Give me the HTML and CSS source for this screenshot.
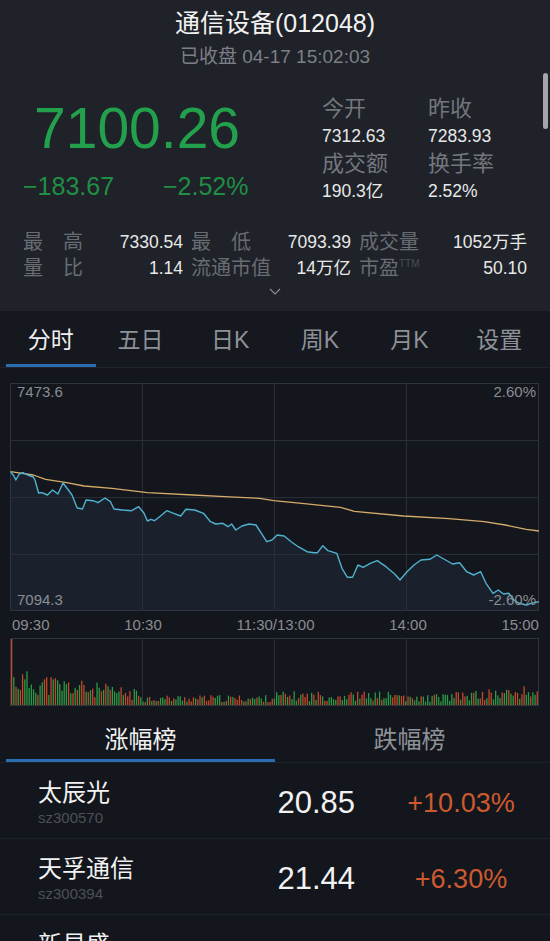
FILE: index.html
```html
<!DOCTYPE html>
<html lang="zh-CN">
<head>
    <meta charset="UTF-8">
    <meta name="viewport" content="width=device-width, initial-scale=1.0">
    <title>通信设备(012048)</title>
    <link rel="stylesheet" href="styles.css">
</head>
<body>
    <div class="quote">
        <div class="scroll-thumb"></div>
        <h1 class="title">通信设备(012048)</h1>
        <div class="status">已收盘 04-17 15:02:03</div>

        <div class="summary">
            <div class="price-block">
                <div class="price">7100.26</div>
                <div class="change"><span class="change-abs">−183.67</span><span>−2.52%</span></div>
            </div>
            <div class="stats">
                <div class="stat-label">今开</div>
                <div class="stat-label">昨收</div>
                <div class="stat-value">7312.63</div>
                <div class="stat-value">7283.93</div>
                <div class="stat-label">成交额</div>
                <div class="stat-label">换手率</div>
                <div class="stat-value">190.3亿</div>
                <div class="stat-value">2.52%</div>
            </div>
        </div>

        <div class="details">
            <div class="detail"><span class="detail-label">最&emsp;高</span><span class="detail-value">7330.54</span></div>
            <div class="detail"><span class="detail-label">最&emsp;低</span><span class="detail-value">7093.39</span></div>
            <div class="detail"><span class="detail-label">成交量</span><span class="detail-value">1052万手</span></div>
            <div class="detail"><span class="detail-label">量&emsp;比</span><span class="detail-value">1.14</span></div>
            <div class="detail"><span class="detail-label">流通市值</span><span class="detail-value">14万亿</span></div>
            <div class="detail"><span class="detail-label">市盈<sup>TTM</sup></span><span class="detail-value">50.10</span></div>
        </div>

        <div class="expand">
            <svg width="12" height="7" viewBox="0 0 12 7"><polyline points="1,1 6,6 11,1" fill="none" stroke="#8a8d93" stroke-width="1.2"/></svg>
        </div>
    </div>

    <div class="period-tabs">
        <div class="period-tab active">分时</div>
        <div class="period-tab">五日</div>
        <div class="period-tab">日K</div>
        <div class="period-tab">周K</div>
        <div class="period-tab">月K</div>
        <div class="period-tab">设置</div>
    </div>

    <div class="chart">
        <svg class="price-chart" viewBox="0 0 529 228">
            <polygon class="price-area" points="0.5,88.7 4,93 5.8,97 9.3,91 12.8,89.7 18,92 23.3,94 25,97 28.6,110 32,109.7 37.4,112 42.6,107 47.9,111 53,100 58.4,107 62,112 67.2,125 72.5,126 76,117 83,117.7 88,119.7 95,115 100.5,118.7 104,126 112.8,127 121.6,127.7 128.6,123.7 133.9,130 137.4,138 140.9,136.3 144.4,137.7 149.6,133.7 156.7,127.7 163.7,130.3 170.7,133 176,126.3 184.7,127 193.5,130.3 200.5,138.7 205.8,141 212.8,140.3 218,143.7 221.6,141 225.8,147 232,143 239,141 246,142 251.4,150.3 256.7,158.7 262,157 267.2,152 274.2,153 281.2,158.7 288.2,163.7 297,168.7 304,169.7 307.5,169.7 312.8,162.7 318,167.7 326.8,170.3 332,185.3 337.4,194.3 342.6,194.3 347.9,182 353.2,184.3 360.2,180.3 367.2,177.7 376,183.7 384.7,191 390,197 397,188.7 404,182 411,177 419.8,176.3 426.8,172 435.6,177 442.6,181 449.6,179.7 456.7,188.7 463.7,192 470.7,188.7 476,200.3 483,210.3 488.2,207 493.5,211 498.8,210.3 504,217 509.3,220.3 516.3,222 523.3,219.7 529,218.7 529,228 0.5,228"/>
            <rect class="frame" x="0.5" y="0.5" width="528" height="227"/>
            <path class="grid" d="M132.5 0V228M264.5 0V228M396.5 0V228M0 57.5H529M0 114.5H529M0 171.5H529"/>
            <polyline class="avg-line" points="0.5,88.7 23.3,92 35.6,96.3 56.7,99.7 74,103 102,105.3 137.4,109.7 183,112 214.6,113.7 249.6,115.3 263.7,117.7 291.8,120.3 330.4,124.3 344.4,128.3 393.5,133 439,135.7 474.2,138.7 495.3,142 516.3,146.3 529,148"/>
            <polyline class="price-line" points="0.5,88.7 4,93 5.8,97 9.3,91 12.8,89.7 18,92 23.3,94 25,97 28.6,110 32,109.7 37.4,112 42.6,107 47.9,111 53,100 58.4,107 62,112 67.2,125 72.5,126 76,117 83,117.7 88,119.7 95,115 100.5,118.7 104,126 112.8,127 121.6,127.7 128.6,123.7 133.9,130 137.4,138 140.9,136.3 144.4,137.7 149.6,133.7 156.7,127.7 163.7,130.3 170.7,133 176,126.3 184.7,127 193.5,130.3 200.5,138.7 205.8,141 212.8,140.3 218,143.7 221.6,141 225.8,147 232,143 239,141 246,142 251.4,150.3 256.7,158.7 262,157 267.2,152 274.2,153 281.2,158.7 288.2,163.7 297,168.7 304,169.7 307.5,169.7 312.8,162.7 318,167.7 326.8,170.3 332,185.3 337.4,194.3 342.6,194.3 347.9,182 353.2,184.3 360.2,180.3 367.2,177.7 376,183.7 384.7,191 390,197 397,188.7 404,182 411,177 419.8,176.3 426.8,172 435.6,177 442.6,181 449.6,179.7 456.7,188.7 463.7,192 470.7,188.7 476,200.3 483,210.3 488.2,207 493.5,211 498.8,210.3 504,217 509.3,220.3 516.3,222 523.3,219.7 529,218.7"/>
        </svg>
        <span class="axis-label top-left">7473.6</span>
        <span class="axis-label top-right">2.60%</span>
        <span class="axis-label bottom-left">7094.3</span>
        <span class="axis-label bottom-right">-2.60%</span>
    </div>

    <div class="time-axis">
        <span>09:30</span>
        <span>10:30</span>
        <span>11:30/13:00</span>
        <span>14:00</span>
        <span>15:00</span>
    </div>

    <div class="volume">
        <svg class="volume-chart" id="volume" viewBox="0 0 529 68">
            <rect class="frame" x="0.5" y="0.5" width="528" height="67"/>
            <path class="grid" d="M132.5 0V68M264.5 0V68M396.5 0V68"/>
        </svg>
    </div>

    <div class="rank-tabs">
        <div class="rank-tab active">涨幅榜</div>
        <div class="rank-tab">跌幅榜</div>
    </div>

    <div class="rank-list">
        <div class="rank-row">
            <div>
                <div class="rank-name">太辰光</div>
                <div class="rank-code">sz300570</div>
            </div>
            <div class="rank-price">20.85</div>
            <div class="rank-change">+10.03%</div>
        </div>
        <div class="rank-row">
            <div>
                <div class="rank-name">天孚通信</div>
                <div class="rank-code">sz300394</div>
            </div>
            <div class="rank-price">21.44</div>
            <div class="rank-change">+6.30%</div>
        </div>
        <div class="rank-row">
            <div>
                <div class="rank-name">新易盛</div>
                <div class="rank-code">sz300502</div>
            </div>
            <div class="rank-price"></div>
            <div class="rank-change"></div>
        </div>
    </div>

    <script>
        // volume bars, one per minute 09:30 - 15:00
        const volume = document.getElementById('volume');
        let seed = 11;

        function rand() {
            seed = (seed * 9301 + 49297) % 233280;
            return seed / 233280;
        }

        for (let i = 0; i <= 240; i++) {
            let base;
            if (i < 60) {
                base = 30 - i * 0.3;
            } else if (i < 120) {
                base = 8;
            } else if (i < 180) {
                base = 11;
            } else {
                base = 7 + (i - 180) * 0.15;
            }
            const h = i === 0 ? 66 : base * (0.35 + rand() * 0.9);
            const up = i === 0 || i === 240 || rand() < 0.4;

            const bar = document.createElementNS('http://www.w3.org/2000/svg', 'rect');
            bar.setAttribute('x', (1 + i * 2.19).toFixed(2));
            bar.setAttribute('y', (67 - h).toFixed(1));
            bar.setAttribute('width', '1.3');
            bar.setAttribute('height', h.toFixed(1));
            bar.setAttribute('class', up ? 'bar-up' : 'bar-down');
            volume.appendChild(bar);
        }
    </script>
</body>
</html>
```

FILE: styles.css
```css
body {
    margin: 0;
    width: 550px;
    height: 941px;
    overflow: hidden;
    background-color: #13161c;
    color: #e8e8e8;
    font-family: "Liberation Sans", "Noto Sans CJK SC", sans-serif;
}

/* header quote */

.quote {
    position: relative;
    height: 311px;
    box-sizing: border-box;
    padding-top: 8px;
    background-color: #1f2229;
}

.scroll-thumb {
    position: absolute;
    top: 73px;
    right: 2px;
    width: 5px;
    height: 56px;
    border-radius: 3px;
    background-color: #a3a6ab;
}

.title {
    margin: 0;
    font-size: 25px;
    font-weight: normal;
    line-height: 30px;
    text-align: center;
    color: #f2f2f2;
}

.status {
    margin-top: 7px;
    font-size: 19px;
    line-height: 24px;
    text-align: center;
    color: #7c7f86;
}

.summary {
    display: flex;
    margin-top: 26px;
}

.price-block {
    width: 322px;
    padding-left: 22px;
    box-sizing: border-box;
}

.price {
    margin-top: 3px;
    padding-left: 12px;
    font-size: 57px;
    line-height: 60px;
    color: #23a04c;
}

.change {
    margin-top: 13px;
    padding-left: 1px;
    font-size: 25px;
    line-height: 30px;
    color: #1f8f45;
}

.change-abs {
    display: inline-block;
    width: 140px;
}

.stats {
    display: grid;
    grid-template-columns: 106px 106px;
}

.stat-label {
    font-size: 22px;
    line-height: 28px;
    color: #73767d;
}

.stat-value {
    font-size: 17.5px;
    line-height: 27px;
    color: #e8e8e8;
}

.details {
    display: grid;
    grid-template-columns: 160px 160px 1fr;
    column-gap: 8px;
    margin-top: 24px;
    padding: 0 23px;
}

.detail {
    display: flex;
    justify-content: space-between;
    height: 26px;
    line-height: 26px;
}

.detail-label {
    font-size: 20px;
    color: #686c73;
}

.detail-label sup {
    font-size: 10px;
    line-height: 0;
    vertical-align: 8px;
    color: #4a4e55;
}

.detail-value {
    font-size: 17.5px;
    color: #e8e8e8;
}

.expand {
    margin-top: 7px;
    text-align: center;
    line-height: 0;
}

/* period tabs */

.period-tabs {
    display: flex;
    padding: 0 6px;
    background-color: #15181e;
    border-bottom: 1px solid #1f232a;
}

.period-tab {
    flex: 1;
    padding: 17px 0 12px;
    font-size: 23px;
    line-height: 24px;
    text-align: center;
    color: #8e9197;
    border-bottom: 3px solid transparent;
}

.period-tab.active {
    color: #f0f0f0;
    border-bottom-color: #2c6db2;
}

/* intraday chart */

.chart {
    position: relative;
    height: 228px;
    margin: 15px 11px 0 10px;
}

.price-chart,
.volume-chart {
    display: block;
    width: 529px;
}

.price-chart {
    height: 228px;
}

.volume-chart {
    height: 68px;
}

.frame {
    fill: none;
    stroke: #30343c;
    stroke-width: 1;
}

.grid {
    fill: none;
    stroke: #2a2e35;
    stroke-width: 1;
}

.price-area {
    fill: #1a212c;
}

.price-line {
    fill: none;
    stroke: #4fb2d0;
    stroke-width: 1.4;
    stroke-linejoin: round;
}

.avg-line {
    fill: none;
    stroke: #d6ab6b;
    stroke-width: 1.3;
    stroke-linejoin: round;
}

.axis-label {
    position: absolute;
    font-size: 15px;
    line-height: 18px;
    color: #8a8d93;
}

.top-left {
    top: 0;
    left: 7px;
}

.top-right {
    top: 0;
    right: 3px;
}

.bottom-left {
    bottom: 2px;
    left: 7px;
}

.bottom-right {
    bottom: 2px;
    right: 3px;
}

.time-axis {
    display: flex;
    justify-content: space-between;
    margin: 5px 11px 0 12px;
    font-size: 15px;
    line-height: 18px;
    color: #8a8d93;
}

.volume {
    margin: 4px 11px 0 10px;
}

.bar-up {
    fill: #c24a2b;
}

.bar-down {
    fill: #2d9a46;
}

/* ranking */

.rank-tabs {
    display: flex;
    padding: 0 6px;
    border-bottom: 1px solid #1c2027;
}

.rank-tab {
    flex: 1;
    padding: 22px 0 7px;
    font-size: 24px;
    line-height: 24px;
    text-align: center;
    color: #8e9197;
    border-bottom: 3px solid transparent;
}

.rank-tab.active {
    color: #f0f0f0;
    border-bottom-color: #2c6db2;
}

.rank-row {
    display: grid;
    grid-template-columns: 207px 110px 1fr;
    align-items: center;
    padding: 16px 0 11px 38px;
    border-bottom: 1px solid #1d2128;
}

.rank-name {
    font-size: 24px;
    line-height: 28px;
    color: #f2f2f2;
}

.rank-code {
    margin-top: 2px;
    font-size: 15px;
    line-height: 18px;
    color: #4c5057;
}

.rank-price {
    font-size: 31px;
    text-align: right;
    color: #f2f2f2;
}

.rank-change {
    padding-left: 17px;
    font-size: 27px;
    text-align: center;
    color: #cc5a2f;
}
```
